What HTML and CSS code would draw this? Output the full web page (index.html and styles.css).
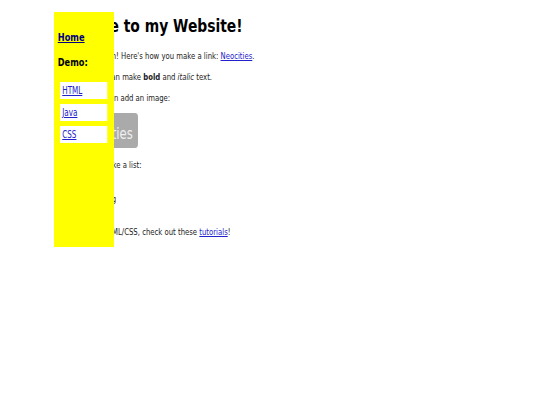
FILE: index.html
```html
<!DOCTYPE html>
<html lang="en">
<head>
    <meta charset="UTF-8">
    <title>My Website</title>
    <link rel="stylesheet" href="styles.css">
</head>
<body>
    <div class="page">
        <nav class="sidebar">
            <a class="home" href="#">Home</a>
            <p class="demo">Demo:</p>
            <a class="side-link" href="#">HTML</a>
            <a class="side-link" href="#">Java</a>
            <a class="side-link" href="#">CSS</a>
        </nav>
        <main>
            <h1><span class="tight">Welcom</span>e to my Website!</h1>
            <p>This is great. Ooh! Here's how you make a link: <a href="#">Neocities</a>.</p>
            <p>Using CSS you can make <strong>bold</strong> and <em>italic</em> text.</p>
            <p>Now, also you can add an image:</p>
            <div class="logo">Neocities</div>
            <p>Also you can make a list:</p>
            <ul>
                <li>First thing</li>
                <li>Something</li>
            </ul>
            <p>To read more HTML/CSS, check out these <a href="#">tutorials</a>!</p>
        </main>
    </div>
</body>
</html>
```

FILE: styles.css
```css
body {
    margin: 0;
    background: white;
    color: #1a1a1a;
    font-family: "DejaVu Sans", sans-serif;
    font-size: 9.2px;
    line-height: 12px;
}

/* reference text is squeezed sideways */
.page {
    width: 540px;
    transform: scaleX(0.75);
    transform-origin: 0 0;
}

main {
    padding: 14px 0 0 74px;
}

h1 {
    margin: 0 0 12px;
    color: #000;
    font-size: 18.5px;
    line-height: 24px;
}

/* this part sits under the sidebar */
.tight {
    letter-spacing: -1.6px;
}

p {
    margin: 0 0 9px;
}

a {
    color: #2222cc;
}

.logo {
    width: 103px;
    height: 35px;
    padding-right: 7px;
    margin-bottom: 11px;
    border-radius: 4px;
    background: #aaa;
    color: #f0f0f0;
    font-size: 15.5px;
    line-height: 42px;
    text-align: right;
}

ul {
    margin: 0 0 21px;
    padding: 0 0 0 31px;
    list-style: none;
    height: 25px;
    display: flex;
    flex-direction: column;
    justify-content: flex-end;
}

.sidebar {
    position: absolute;
    top: 12px;
    left: 72px;
    width: 80px;
    height: 236px;
    box-sizing: border-box;
    padding: 20px 9px 0 5px;
    background: yellow;
    display: flex;
    flex-direction: column;
    font-size: 9.6px;
}

.home {
    color: #000080;
    font-size: 11px;
    font-weight: bold;
}

.demo {
    margin: 13px 0 12.5px;
    color: #000;
    font-size: 11px;
    font-weight: bold;
}

.side-link {
    margin: 0 0 5px 3px;
    padding: 3px 3px;
    height: 11px;
    background: white;
}
```
